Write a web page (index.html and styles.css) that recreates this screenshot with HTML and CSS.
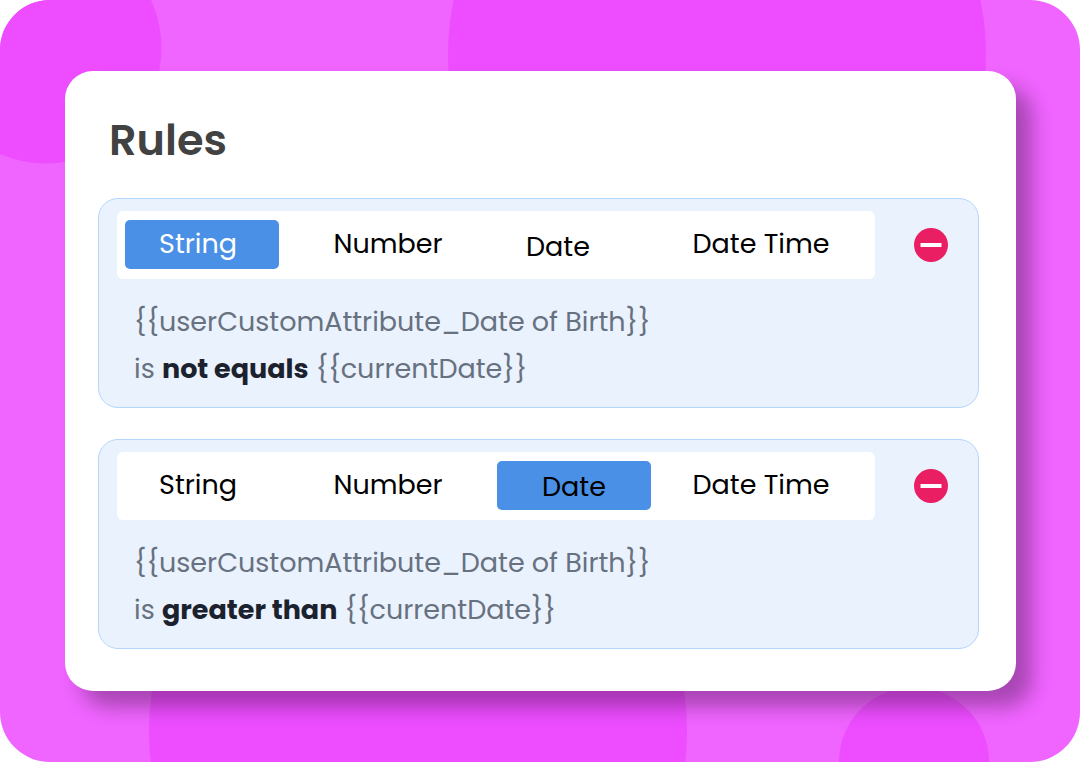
FILE: index.html
```html
<!DOCTYPE html>
<html lang="en">
<head>
<meta charset="utf-8">
<meta name="viewport" content="width=device-width, initial-scale=1">
<title>Rules</title>
<link rel="stylesheet" href="styles.css">
</head>
<body>
<main class="stage">
  <svg class="stage-art" viewBox="0 0 1080 762" preserveAspectRatio="xMidYMid slice" aria-hidden="true">
    <circle cx="46" cy="48" r="115.5"/>
    <circle cx="717" cy="55" r="269"/>
    <circle cx="418" cy="731" r="269"/>
    <circle cx="914" cy="762" r="75"/>
  </svg>
  <section class="card">
    <h1 class="title">Rules</h1>
    <div class="rules">
      <article class="rule">
        <div class="rule-head">
          <div class="types" role="group" aria-label="Attribute type">
            <button type="button" class="type type-string type-active" aria-pressed="true">String</button>
            <button type="button" class="type" aria-pressed="false">Number</button>
            <button type="button" class="type type-date" aria-pressed="false">Date</button>
            <button type="button" class="type" aria-pressed="false">Date Time</button>
          </div>
          <button type="button" class="remove" aria-label="Remove rule">
            <svg class="remove-icon" viewBox="0 0 34 34" aria-hidden="true"><circle cx="17" cy="17" r="17"/><rect x="6.5" y="15" width="21" height="4"/></svg>
          </button>
        </div>
        <p class="condition">{{userCustomAttribute_Date of Birth}}<br>is <strong class="operator">not equals</strong> {{currentDate}}</p>
      </article>
      <article class="rule">
        <div class="rule-head">
          <div class="types" role="group" aria-label="Attribute type">
            <button type="button" class="type type-string" aria-pressed="false">String</button>
            <button type="button" class="type" aria-pressed="false">Number</button>
            <button type="button" class="type type-date type-date-active" aria-pressed="true">Date</button>
            <button type="button" class="type" aria-pressed="false">Date Time</button>
          </div>
          <button type="button" class="remove" aria-label="Remove rule">
            <svg class="remove-icon" viewBox="0 0 34 34" aria-hidden="true"><circle cx="17" cy="17" r="17"/><rect x="6.5" y="15" width="21" height="4"/></svg>
          </button>
        </div>
        <p class="condition">{{userCustomAttribute_Date of Birth}}<br>is <strong class="operator">greater than</strong> {{currentDate}}</p>
      </article>
    </div>
  </section>
</main>
</body>
</html>
```

FILE: styles.css
```css
* { box-sizing: border-box; }

body {
  margin: 0;
  background: #fff;
  font-family: Poppins, Inter, "Open Sans", sans-serif;
}

.stage {
  position: relative;
  min-height: 100vh;
  padding: 71px 64px 71px 65px;
  border-radius: 50px;
  overflow: hidden;
  background: #f064ff;
}

.stage-art {
  position: absolute;
  inset: 0;
  width: 100%;
  height: 100%;
  fill: #ed4dff;
}

.card {
  position: relative;
  padding: 39px 37px 42px 33px;
  border-radius: 28px;
  background: #fff;
  box-shadow: 16px 16px 20px rgba(0, 0, 0, 0.3);
}

.title {
  margin: 0 0 28px;
  padding-left: 11px;
  color: #424242;
  font-size: 43px;
  font-weight: 600;
  line-height: 60px;
}

.rules {
  display: grid;
  gap: 31px;
}

.rule {
  padding: 12px 30px 15px 18px;
  border: 1px solid #b3d6fc;
  border-radius: 20px;
  background: #eaf2fe;
}

.rule-head {
  display: flex;
  align-items: center;
  gap: 39px;
}

.types {
  flex: 1;
  display: grid;
  grid-template-columns: 154fr 218fr 154fr 220fr;
  padding: 9px 4px 10px 8px;
  border-radius: 6px;
  background: #fff;
}

.type {
  height: 49px;
  padding: 0 0 2px;
  border: 0;
  border-radius: 5px;
  background: none;
  color: #000;
  font: inherit;
  font-size: 27px;
  white-space: nowrap;
}

.type-string { padding-right: 8px; }

.type-active {
  background: #4990e6;
  color: #fff;
}

.type-date { padding: 4px 32px 0 0; }

.type-date-active {
  padding: 2px 0 0;
  background: #4990e6;
}

.remove {
  width: 34px;
  height: 34px;
  padding: 0;
  border: 0;
  background: none;
}

.remove-icon {
  display: block;
  width: 34px;
  height: 34px;
  fill: #e91e63;
}

.remove-icon rect { fill: #fff; }

.condition {
  margin: 19px 0 0;
  padding-left: 17px;
  color: #67717f;
  font-size: 27px;
  line-height: 47px;
}

.operator {
  color: #1c222d;
  font-weight: 700;
}
```
